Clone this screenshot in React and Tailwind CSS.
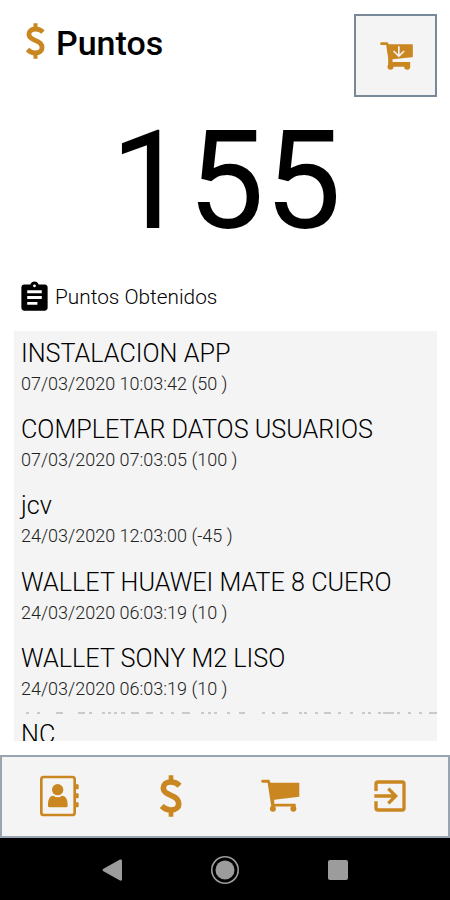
import { MdAssignment } from 'react-icons/md';

const points = [
  { name: 'INSTALACION APP', date: '07/03/2020 10:03:42', value: 50 },
  { name: 'COMPLETAR DATOS USUARIOS', date: '07/03/2020 07:03:05', value: 100 },
  { name: 'jcv', date: '24/03/2020 12:03:00', value: -45 },
  { name: 'WALLET HUAWEI MATE 8 CUERO', date: '24/03/2020 06:03:19', value: 10 },
  { name: 'WALLET SONY M2 LISO', date: '24/03/2020 06:03:19', value: 10 },
];

// [x, width] of each visible stroke in the cut off line
const cutMarks = [
  [12, 3], [23, 3], [42, 7], [64, 7], [75, 3], [88, 3], [94, 3], [100, 3], [107, 4], [117, 8],
  [132, 7], [146, 3], [157, 3], [168, 8], [187, 3], [194, 3], [200, 3], [213, 3], [225, 6],
  [248, 3], [258, 3], [268, 6], [285, 3], [290, 3], [301, 3], [310, 7], [324, 3], [336, 3],
  [348, 3], [354, 3], [364, 3], [369, 11], [383, 3], [394, 3], [405, 3], [415, 8],
];

function DollarIcon({ className }) {
  return (
    <svg viewBox="0 0 66 126" className={className} fill="none" stroke="currentColor" strokeWidth="17">
      <path d="M59 32Q48 21 33 21C18 21 10 29 10 39C10 50 20 56 33 61C47 66 56 74 56 86C56 98 46 105 32 105Q17 105 5 93" />
      <path d="M33 1v18M33 107v18" strokeWidth="14" />
    </svg>
  );
}

function ContactsIcon() {
  return (
    <svg viewBox="0 0 117 126" className="w-[39px] h-[42px]" fill="currentColor">
      <rect x="4" y="6" width="100" height="114" rx="7" fill="none" stroke="currentColor" strokeWidth="8" />
      <rect x="105" y="28" width="11" height="15" rx="3" />
      <rect x="105" y="55" width="11" height="15" rx="3" />
      <rect x="105" y="82" width="11" height="15" rx="3" />
      <circle cx="53" cy="44" r="17" />
      <path d="M24 92c0-19 4-29 16-30q13 9 26 0c12 1 17 11 17 30q0 5-5 5H29q-5 0-5-5z" />
    </svg>
  );
}

function CartIcon() {
  return (
    <svg viewBox="0 0 116 100" className="w-[39px] h-[33px]" fill="currentColor">
      <path d="M4 2h20l4 9h87v43l-76 9v12h65v15h-8v-7H30L19 11H4a4 4 0 0 1 0-9z" />
      <circle cx="35" cy="90" r="9" />
      <circle cx="97" cy="90" r="9" />
    </svg>
  );
}

function CartDownIcon() {
  return (
    <svg viewBox="0 0 98 84" className="w-[33px] h-[28px]" fill="currentColor">
      <path d="M4 1h18l4 6h69q3 0 3 3v33q0 3-3 3l-58 6v8h53v14H24V49L18 9H4a4 4 0 0 1 0-8z" />
      <circle cx="31" cy="74" r="9" />
      <circle cx="81" cy="74" r="9" />
      <path d="M56 13v26M40 27l16 15 16-15" fill="none" stroke="#f4f4f4" strokeWidth="5" />
    </svg>
  );
}

function ExitIcon() {
  return (
    <svg viewBox="0 0 96 96" className="w-[32px] h-[32px]" fill="none" stroke="currentColor" strokeWidth="10">
      <path d="M6 33V12q0-6 6-6h73q5 0 5 6v72q0 6-5 6H12q-6 0-6-6V64" />
      <path d="M1 48h64M43 26l22 22-22 22" />
    </svg>
  );
}

export default function App() {
  return (
    <div className="w-[450px] h-[900px] flex flex-col overflow-hidden bg-white text-black font-[Roboto,sans-serif]">
      {/* Header */}
      <div className="h-[97px] shrink-0 flex justify-between pl-[26px] pr-[13px] pt-[14px]">
        <div className="h-[58px] flex items-center">
          <DollarIcon className="w-[19px] h-[36px] mb-[4px] text-[#ca8721]" />
          <h1 className="ml-[11px] text-[34px] leading-[58px] font-medium whitespace-nowrap">Puntos</h1>
        </div>
        <button className="w-[83px] h-[83px] flex items-center justify-center pl-px border-2 border-[#78899a] bg-[#f4f4f4] text-[#ca8721]">
          <CartDownIcon />
        </button>
      </div>

      {/* Total */}
      <div className="h-[164px] shrink-0 text-center text-[137px] leading-[164px] pt-[2px] pl-[2px]">155</div>

      {/* List title */}
      <div className="h-[70px] shrink-0 flex items-center pl-[17px] pt-[2px]">
        <MdAssignment className="w-[35px] h-[35px]" />
        <h2 className="ml-[3px] mt-[2px] text-[20.8px] font-light whitespace-nowrap">Puntos Obtenidos</h2>
      </div>

      {/* List */}
      <div className="h-[410px] shrink-0 ml-[14px] mr-[13px] overflow-hidden bg-[#f4f4f4]">
        {points.map((p, i) => (
          <div key={i} className="h-[76.2px] pl-[7px] pt-[8px]">
            <p className="text-[25.2px] leading-[30px] font-light whitespace-nowrap">{p.name}</p>
            <p className="text-[18px] leading-[30px] font-light text-[#222] whitespace-nowrap">
              {p.date} ({p.value} )
            </p>
          </div>
        ))}
        <svg viewBox="0 0 423 2" className="w-[423px] h-[2px]" fill="#cacaca">
          {cutMarks.map(([x, w]) => (
            <rect key={x} x={x} y="0" width={w} height="2" />
          ))}
        </svg>
        <p className="pl-[7px] mt-[6px] text-[25.2px] leading-[30px] font-light">NC</p>
      </div>

      {/* Tabs */}
      <div className="mt-[14px] h-[83px] shrink-0 flex items-center border-2 border-[#98a4b0] bg-[#f4f4f4] pl-[3px] pr-[3px] pb-[2px] text-[#ca8721]">
        <div className="flex-1 flex justify-center">
          <ContactsIcon />
        </div>
        <div className="flex-1 flex justify-center pl-[2px]">
          <DollarIcon className="w-[22px] h-[42px]" />
        </div>
        <div className="flex-1 flex justify-center">
          <CartIcon />
        </div>
        <div className="flex-1 flex justify-center">
          <ExitIcon />
        </div>
      </div>

      {/* Android navigation */}
      <div className="h-[62px] shrink-0 flex items-center justify-between px-[102px] pt-[2px] bg-black text-[#9c9c9c]">
        <svg viewBox="0 0 20 22" className="w-[20px] h-[22px]" fill="currentColor">
          <path d="M1 10 18 .5q2-.5 2 1v19q0 1.500-2 1L1 12q-1-1 0-2z" />
        </svg>
        <svg viewBox="0 0 30 30" className="w-[30px] h-[30px]">
          <circle cx="15" cy="15" r="13.200" fill="none" stroke="currentColor" strokeWidth="1.600" />
          <circle cx="15" cy="15" r="9.500" fill="currentColor" />
        </svg>
        <div className="w-[20px] h-[20px] rounded-[2px] bg-[#9c9c9c]" />
      </div>
    </div>
  );
}
